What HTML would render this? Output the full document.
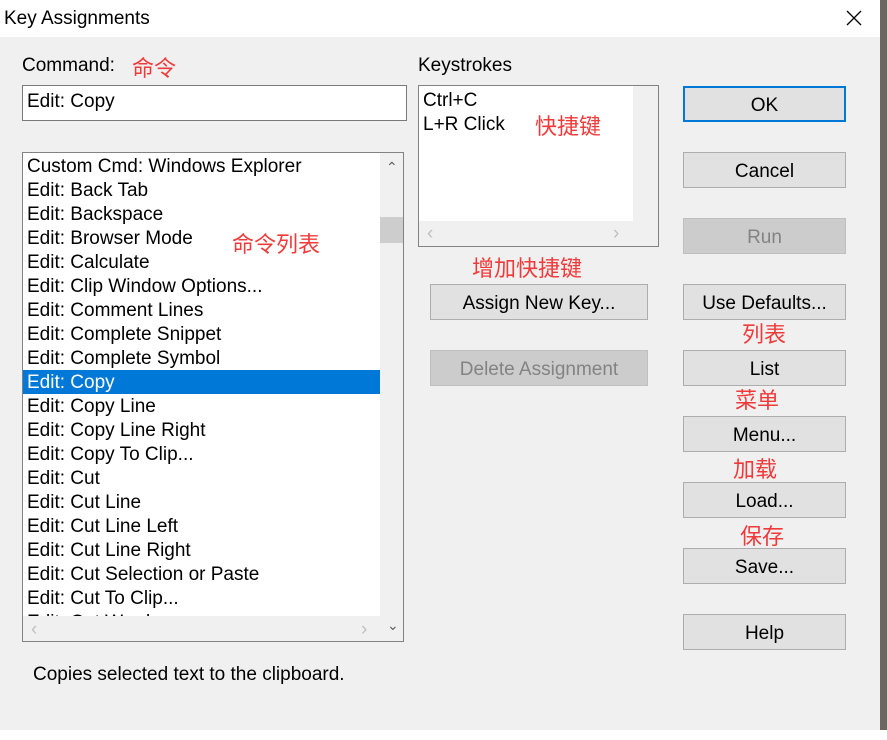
<!DOCTYPE html>
<html><head><meta charset="utf-8"><style>
*{margin:0;padding:0;box-sizing:border-box}
body{width:887px;height:740px;overflow:hidden;background:#3a3a3a;position:relative;font-family:"Liberation Sans","Noto Sans CJK SC",sans-serif;font-size:19px;color:#000}
.abs{position:absolute}
#dlg{left:0;top:0;width:880px;height:730px;background:#f0f0f0}
#title{left:0;top:0;width:880px;height:37px;background:#fff}
.btn{position:absolute;left:683px;width:163px;height:36px;background:#e1e1e1;border:1px solid #adadad;text-align:center;line-height:37px}
.dis{background:#cccccc;border-color:#bfbfbf;color:#838383}
.red{position:absolute;color:#f03a3a;font-size:22px;font-family:"Noto Sans CJK SC",sans-serif;line-height:1}
.row{height:24px;line-height:25px;padding-left:4px;white-space:nowrap}
</style></head><body>
<div class="abs" style="left:0;top:730px;width:887px;height:10px;background:#fff"></div>
<div class="abs" style="left:880px;top:0;width:7px;height:730px;background:#6b6660"></div>
<div id="dlg" class="abs"></div>
<div id="title" class="abs"></div>
<div class="abs" style="left:4px;top:8px;font-size:19px">Key Assignments</div>
<svg class="abs" style="left:846px;top:10px" width="16" height="16"><path d="M1 1L15 15M15 1L1 15" stroke="#000" stroke-width="1.3"/></svg>

<div class="abs" style="left:22px;top:55px">Command:</div>
<div class="red" style="left:132px;top:56px">命令</div>
<div class="abs" style="left:22px;top:85px;width:385px;height:36px;background:#fff;border:1px solid #7a7a7a;padding:5px 4px">Edit: Copy</div>

<div class="abs" style="left:22px;top:152px;width:382px;height:490px;background:#fff;border:1px solid #828282;overflow:hidden">
 <div class="abs" style="left:0;top:1px;width:357px;height:462px;overflow:hidden">
  <div class="row">Custom Cmd: Windows Explorer</div>
  <div class="row">Edit: Back Tab</div>
  <div class="row">Edit: Backspace</div>
  <div class="row">Edit: Browser Mode</div>
  <div class="row">Edit: Calculate</div>
  <div class="row">Edit: Clip Window Options...</div>
  <div class="row">Edit: Comment Lines</div>
  <div class="row">Edit: Complete Snippet</div>
  <div class="row">Edit: Complete Symbol</div>
  <div class="row" style="background:#0078d7;color:#fff">Edit: Copy</div>
  <div class="row">Edit: Copy Line</div>
  <div class="row">Edit: Copy Line Right</div>
  <div class="row">Edit: Copy To Clip...</div>
  <div class="row">Edit: Cut</div>
  <div class="row">Edit: Cut Line</div>
  <div class="row">Edit: Cut Line Left</div>
  <div class="row">Edit: Cut Line Right</div>
  <div class="row">Edit: Cut Selection or Paste</div>
  <div class="row">Edit: Cut To Clip...</div>
  <div class="row">Edit: Cut Word</div>
 </div>
 <div class="abs" style="left:357px;top:0;width:24px;height:488px;background:#f0f0f0"></div>
 <div class="abs" style="left:357px;top:64px;width:24px;height:26px;background:#cdcdcd"></div>
 <div class="abs" style="left:0;top:463px;width:357px;height:25px;background:#f0f0f0"></div>
 <div class="abs" style="left:363px;top:6px;font-size:14px;color:#606060">&#8963;</div>
 <div class="abs" style="left:364px;top:464px;font-size:14px;color:#606060">&#8964;</div>
 <div class="abs" style="left:8px;top:466px;color:#c0c0c0">&lsaquo;</div>
 <div class="abs" style="left:338px;top:466px;color:#c0c0c0">&rsaquo;</div>
</div>
<div class="red" style="left:232px;top:232px">命令列表</div>

<div class="abs" style="left:418px;top:55px">Keystrokes</div>
<div class="abs" style="left:418px;top:85px;width:241px;height:162px;background:#fff;border:1px solid #828282;overflow:hidden">
 <div class="abs" style="left:4px;top:3px;line-height:24px">Ctrl+C<br>L+R Click</div>
 <div class="abs" style="left:214px;top:0;width:25px;height:160px;background:#f0f0f0"></div>
 <div class="abs" style="left:0;top:135px;width:214px;height:25px;background:#f0f0f0"></div>
 <div class="abs" style="left:8px;top:137px;color:#c0c0c0">&lsaquo;</div>
 <div class="abs" style="left:194px;top:137px;color:#c0c0c0">&rsaquo;</div>
</div>
<div class="red" style="left:535px;top:114px">快捷键</div>
<div class="red" style="left:472px;top:256px">增加快捷键</div>
<div class="btn" style="left:430px;width:218px;top:284px">Assign New Key...</div>
<div class="btn dis" style="left:430px;width:218px;top:350px">Delete Assignment</div>

<div class="btn" style="top:86px;border:2px solid #0078d7;line-height:35px">OK</div>
<div class="btn" style="top:152px">Cancel</div>
<div class="btn dis" style="top:218px">Run</div>
<div class="btn" style="top:284px">Use Defaults...</div>
<div class="red" style="left:742px;top:322px">列表</div>
<div class="btn" style="top:350px">List</div>
<div class="red" style="left:735px;top:388px">菜单</div>
<div class="btn" style="top:416px">Menu...</div>
<div class="red" style="left:733px;top:457px">加载</div>
<div class="btn" style="top:482px">Load...</div>
<div class="red" style="left:740px;top:524px">保存</div>
<div class="btn" style="top:548px">Save...</div>
<div class="btn" style="top:614px">Help</div>

<div class="abs" style="left:33px;top:664px">Copies selected text to the clipboard.</div>
</body></html>
